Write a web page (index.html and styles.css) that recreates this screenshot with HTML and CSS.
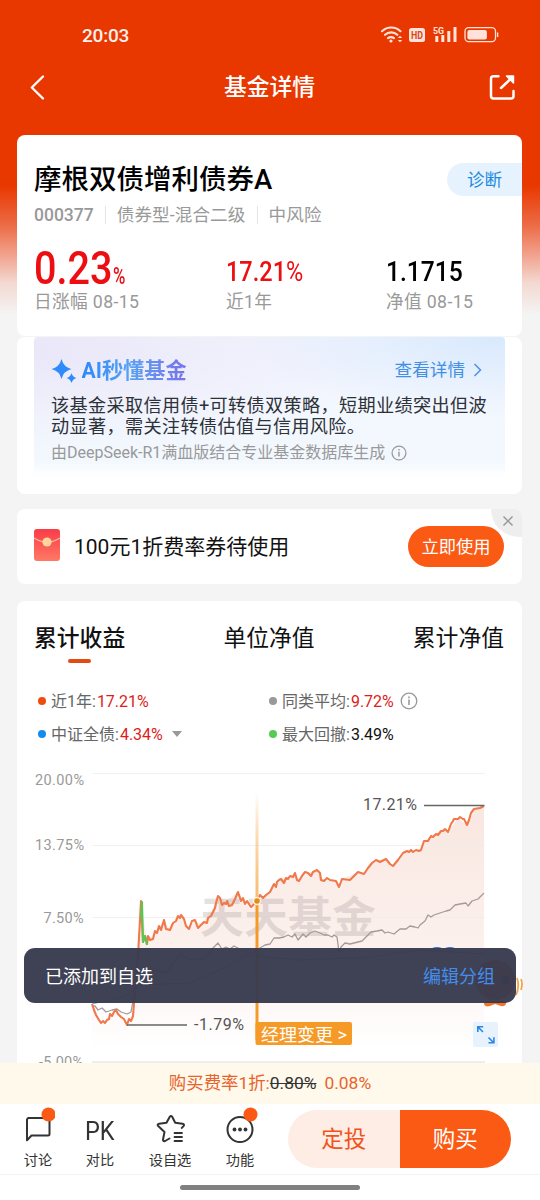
FILE: index.html
```html
<!DOCTYPE html>
<html lang="zh-CN">
<head>
<meta charset="utf-8">
<title>基金详情</title>
<link rel="stylesheet" href="styles.css">
</head>
<body>
<div class="phone">
  <div class="content">
    <header class="status">
      <span class="time">20:03</span>
      <svg class="status-icons" width="120" height="20" viewBox="380 25 120 20" fill="none" stroke="#ffe3da">
        <g stroke-width="2.1" stroke-linecap="round"><path d="M382 31.2a13.5 13.5 0 0 1 18.5 0M385 34.8a9 9 0 0 1 12.3 0M388 38.2a5 5 0 0 1 6 0"/></g>
        <circle cx="391" cy="41" r="1.6" fill="#ffe3da" stroke="none"/>
        <path d="M397.8 38l2.2-2.2 2.2 2.2zM397.8 40l2.2 2.2 2.2-2.2z" fill="#ffe3da" stroke="none"/>
        <rect x="409" y="28" width="16" height="14" rx="2.5" fill="#ffe3da" stroke="none"/>
        <text class="hd" x="411" y="39" textLength="12" lengthAdjust="spacingAndGlyphs">HD</text>
        <text class="fiveg" x="433" y="33.6" textLength="11" lengthAdjust="spacingAndGlyphs">5G</text>
        <path d="M436.8 36v6M442.8 35v7M448.8 31v11M455 27v15" stroke-width="3"/>
        <rect x="465" y="27.6" width="30.5" height="14" rx="3.5" stroke-width="1.3"/>
        <rect x="467.4" y="30" width="19.5" height="9.5" rx="2" fill="#ffe3da" stroke="none"/>
        <path d="M497.6 32.5v4.5" stroke-width="1.4"/>
      </svg>
    </header>
    <nav class="titlebar">
      <svg width="20" height="28" viewBox="27 73 20 28" fill="none" stroke="#fff" stroke-width="2.4" stroke-linecap="round" stroke-linejoin="round"><path d="M43 76.500L31.800 87.500L43 98.500"/></svg>
      <h1>基金详情</h1>
      <svg width="30" height="30" viewBox="487 72 30 30" fill="none" stroke="#fff" stroke-width="2.5" stroke-linecap="round"><path d="M498.500 76.200h-5a2.500 2.500 0 0 0-2.500 2.500v17.300a2.500 2.500 0 0 0 2.500 2.500h17.500a2.500 2.500 0 0 0 2.500-2.500v-5M501 88l11-10.500"/><path d="M506.500 76h7v7z" fill="#fff" stroke-width="1.500" stroke-linejoin="round"/></svg>
    </nav>

    <section class="card summary">
      <div class="name-row"><h2>摩根双债增利债券A</h2><a class="diagnose">诊断</a></div>
      <div class="meta"><span class="code">000377</span><span>债券型-混合二级</span><span>中风险</span></div>
      <div class="stats">
        <div><p class="num big"><b>0.23</b><i>%</i></p><p class="label">日涨幅 08-15</p></div>
        <div><p class="num year"><b>17.21<em>%</em></b></p><p class="label">近1年</p></div>
        <div><p class="num nav-value"><b>1.1715</b></p><p class="label">净值 08-15</p></div>
      </div>
    </section>
    <section class="card ai-card">
      <div class="ai">
        <div class="ai-head">
          <svg width="28" height="26" viewBox="51 358 28 26" fill="#2f8bfb"><path d="M61.500 360q2 8 10 10q-8 2-10 10q-2-8-10-10q8-2 10-10zM71.500 374q1.200 4.200 5 5q-3.800 1-5 5q-1.200-4-5-5q3.800-.8 5-5z"/></svg>
          <strong>AI秒懂基金</strong>
          <span class="more">查看详情</span>
          <svg width="10" height="16" viewBox="0 0 10 16" fill="none" stroke="#4c93e6" stroke-width="1.500"><path d="M1.500 2l6 6-6 6"/></svg>
        </div>
        <p class="ai-text">该基金采取信用债+可转债双策略，短期业绩突出但波<br>动显著，需关注转债估值与信用风险。</p>
        <p class="ai-source"><span>由DeepSeek-R1满血版结合专业基金数据库生成</span><svg width="16" height="16" viewBox="0 0 18 18" fill="none" stroke="#999" stroke-width="1.400"><circle cx="9" cy="9" r="7.800"/><path d="M9 7.500v5.500M9 4.500v1.700" stroke-width="1.600"/></svg></p>
      </div>
    </section>

    <section class="card promo">
      <svg class="envelope" width="26" height="32" viewBox="0 0 26 32"><defs><linearGradient id="env" x2="0" y2="1"><stop stop-color="#fa3c49"/><stop offset="1" stop-color="#ff7965"/></linearGradient></defs><rect width="26" height="32" rx="3" fill="url(#env)"/><path d="M0 9q13 8 26 0" fill="none" stroke="#ffb39c" stroke-width="1.200"/><circle cx="13" cy="13" r="4.600" fill="#ffd79a"/></svg>
      <p>100元1折费率券待使用</p>
      <button>立即使用</button>
      <span class="close"><svg width="12" height="12" viewBox="0 0 12 12" stroke="#999" stroke-width="1.500"><path d="M1.500 1.500l9 9M10.500 1.500l-9 9"/></svg></span>
    </section>

    <section class="card chart-card">
      <div class="tabs"><span class="active">累计收益</span><span>单位净值</span><span>累计净值</span></div>
      <div class="legend">
        <p><i class="dot orange"></i>近1年:<b>17.21%</b></p>
        <p><i class="dot gray"></i>同类平均:<b>9.72%</b><svg width="18" height="18" viewBox="0 0 18 18" fill="none" stroke="#999" stroke-width="1.300"><circle cx="9" cy="9" r="7.800"/><path d="M9 7.500v5.500M9 4.500v1.700" stroke-width="1.600"/></svg></p>
        <p><i class="dot blue"></i>中证全债:<b>4.34%</b><svg class="drop" width="10" height="6" viewBox="0 0 10 6" fill="#999"><path d="M0 0h10L5 6z"/></svg></p>
        <p><i class="dot green"></i>最大回撤:<b class="black">3.49%</b></p>
      </div>
      <svg class="chart" width="505" height="309" viewBox="17 754 505 309">
        <defs>
          <linearGradient id="area" x1="0" y1="806" x2="0" y2="1050" gradientUnits="userSpaceOnUse"><stop stop-color="#f9e7e0"/><stop offset=".6" stop-color="#fcf1ee"/><stop offset="1" stop-color="#fff"/></linearGradient>
          <linearGradient id="marker" x1="0" y1="792" x2="0" y2="900" gradientUnits="userSpaceOnUse"><stop stop-color="#f79b2b" stop-opacity="0"/><stop offset="1" stop-color="#f7bd74"/></linearGradient>
        </defs>
        <path d="M92 1062V1004L101 1023L110 1014L116 1010L127 1025L133 1016L138 955L141 901L147 940L156 931L164 920L170 930L180 915L189 929L195 920L201 924L213 908L218 896L226 901L238 892L251 907L257 901L270 892L282 879L295 873L299 881L308 873L318 870L323 881L336 881L339 887L342 879L358 872L364 874L376 860L386 859L393 866L407 851L420 851L424 841L444 829L448 832L458 818L467 825L476 808L484 806V1062z" fill="url(#area)"/>
        <path d="M92 773.500H485M92 845.500H485M92 917.500H485M92 989.500H485" stroke="#eee" stroke-opacity=".8"/>
        <path d="M92 1062H485" stroke="#ddd"/>
        <g class="axis"><text x="35" y="784.500" textLength="49">20.00%</text><text x="35" y="850" textLength="49">13.75%</text><text x="43.500" y="922.500" textLength="40">7.50%</text><text x="39" y="1067" textLength="44">-5.00%</text></g>
        <text class="watermark" x="200" y="933" textLength="176" lengthAdjust="spacingAndGlyphs">天天基金</text>
        <g fill="none" stroke-linejoin="round">
          <path d="M92 1004L105 1001L125 996L141 985L190 983L224 968L245 955L300 960L370 957L420 950L484 954" stroke="#70a8dd" stroke-width="1"/>
          <path d="M92 1006L95 1006L98 1010L102 1008L106 1012L112 1010L117 1009L121 1012L127 1014L131 1012L135 990L141 975L152 969L166 973L180 954L190 960L205 958L213 948L218 943L222 949L226 947L230 949L234 946L238 948L250 954L260 948L265 945L270 944L274 938L279 938L284 937L288 935L292 937L295 934L298 940L303 934L306 937L310 933L315 931L320 933L324 935L328 935L332 937L334 935L337 937L339 952L341 947L345 943L350 944L358 942L362 941L366 937L371 932L377 931L382 930L385 933L388 932L394 934L400 929L406 929L410 926L415 927L418 928L420 925L425 921L428 915L431 917L434 915L440 913L446 911L450 910L455 905L460 904L466 903L468 906L472 901L478 899L481 896L484 893" stroke="#a49a98" stroke-width="1.300"/>
          <path id="main" d="M92 1004L94 1010L96 1015L99 1020L101 1023L103 1021L105 1023L107 1020L109 1019L110 1014L112 1016L114 1012L116 1010L118 1014L121 1017L124 1019L127 1025L129 1019L131 1021L133 1016L135 990L138 955L140 920L141 901L143 942L145 936L147 944L148 936L150 940L153 939L155 931L157 933L159 926L161 930L164 920L166 929L170 930L173 923L176 921L178 916L180 918L181 915L184 919L186 926L189 929L192 921L195 920L198 928L201 925L204 922L207 923L208 918L211 916L213 912L215 908L216 903L218 896L220 898L222 905L224 903L226 904L227 901L229 906L232 905L235 899L238 892L241 901L243 898L245 904L247 901L251 907L254 904L257 901L260 895L263 898L266 895L270 892L272 888L274 884L276 887L277 882L279 880L281 879L284 883L286 878L288 879L290 876L293 877L295 873L297 880L299 881L302 876L305 872L308 873L311 876L313 872L317 870L320 873L321 880L324 881L327 878L330 880L336 881L339 887L342 879L350 880L354 876L358 872L361 873L364 874L368 868L372 863L376 860L380 862L386 859L390 864L393 866L398 860L403 853L407 851L409 852L411 850L413 852L416 850L419 851L421 850L424 841L428 841L431 836L433 837L436 834L438 835L441 831L443 831L445 829L448 832L451 824L453 821L454 819L458 819L460 817L463 819L464 819L467 825L469 820L471 813L474 809L480 808L484 806" stroke="#f0784a" stroke-width="2.100"/>
          <path d="M141 918L142 902L143 942L145 936L147 945" stroke="#5cc653" stroke-width="2.100"/>
          <path d="M424 805.500H484.500M127 1025H187" stroke="#666" stroke-width="1.300"/>
        </g>
        <g class="callout"><text x="363" y="810" textLength="54">17.21%</text><text x="194" y="1030" textLength="50">-1.79%</text></g>
        <rect x="255.500" y="792" width="3" height="110" fill="url(#marker)"/>
        <path d="M257 901V1040" stroke="#f59a27" stroke-width="3"/>
        <circle cx="257" cy="901" r="3.500" fill="#e28b18" stroke="#fff1d9" stroke-width="1.500"/>
        <rect x="255.500" y="1022" width="96.500" height="23" rx="2" fill="#f59a27"/>
        <text class="manager" x="261" y="1040.500" textLength="86" lengthAdjust="spacingAndGlyphs">经理变更 &gt;</text>
        <rect x="473" y="1022" width="25" height="25" rx="2" fill="#e7f2fd"/>
        <path d="M483 1032l-5-5M477.800 1032v-5.200h5.400M488.500 1037.500l5 5M488.500 1042.800h5.400v-5.500" fill="none" stroke="#2987e9" stroke-width="1.600"/>
      </svg>
    </section>
  </div>

  <div class="rate">购买费率1折:<s>0.80%</s><span>0.08%</span></div>
  <footer class="actions">
    <div class="action"><svg width="34" height="38" viewBox="21 1106 34 38" fill="none" stroke="#333" stroke-width="2" stroke-linejoin="round"><path d="M28 1118h20a1.500 1.500 0 0 1 1.500 1.500v14.500a1.500 1.500 0 0 1-1.500 1.500H31.500L27 1140.300v-20.800z"/><circle cx="48.500" cy="1114.500" r="7" fill="#fa5a14" stroke="none"/></svg><span>讨论</span></div>
    <div class="action"><div class="pk">PK</div><span>对比</span></div>
    <div class="action"><svg width="34" height="38" viewBox="153 1106 34 38" fill="none" stroke="#333" stroke-width="2" stroke-linejoin="round" stroke-linecap="round"><path d="M169.500 1138.500l-4.500 2.500q-2 .8-2-1.500l1.500-7.500-6.300-6q-1.500-1.800 1-2.200l7.300-1 3.300-6q1.200-1.800 2.400 0l3 6 7.300 1q2.400.5 1 2.300l-1.700 1.800"/><path d="M174.500 1133h7.500M174.500 1137h7.500M174.500 1141h7.500" stroke-width="1.800"/></svg><span>设自选</span></div>
    <div class="action"><svg width="38" height="38" viewBox="221 1106 38 38" fill="none" stroke="#333" stroke-width="2"><circle cx="240" cy="1129.500" r="12.500"/><g fill="#333" stroke="none"><circle cx="234.500" cy="1129.500" r="1.900"/><circle cx="240" cy="1129.500" r="1.900"/><circle cx="245.500" cy="1129.500" r="1.900"/></g><circle cx="250.500" cy="1114.500" r="7" fill="#fa5a14" stroke="none"/></svg><span>功能</span></div>
    <div class="buy"><span>定投</span><span>购买</span></div>
  </footer>
  <div class="home"><i></i></div>

  <svg class="mascot" width="100" height="70" viewBox="425 942 100 70">
    <path d="M433 948.500q4-1.500 8 0M446 948.500q4-1.500 8 0" fill="none" stroke="#2f70d8" stroke-width="1.500"/>
    <circle cx="495" cy="980" r="20" fill="#e86b28"/><circle cx="484" cy="980" r="4" fill="#222"/><circle cx="505" cy="980" r="4" fill="#222"/>
    <path d="M484 1001q-1 7 6 5l5-2 6 2q6 1 5-5z" fill="#f47424"/>
    <path d="M517 978q3 8-1 17M521 979q2 5 0 11" fill="none" stroke="#f5a24c" stroke-width="1.800"/>
  </svg>
  <div class="toast"><span>已添加到自选</span><a>编辑分组</a></div>
</div>
</body>
</html>
```

FILE: styles.css
```css
* { box-sizing: border-box; }
body, h1, h2, p { margin: 0; }
body { font-family: Roboto, "Noto Sans CJK SC", sans-serif; color: #111; }
svg { display: block; flex: none; }
i, em { font-style: normal; }

.phone {
  position: relative;
  display: flex;
  flex-direction: column;
  width: 540px;
  height: 1200px;
  overflow: hidden;
  background: #f4f4f4 linear-gradient(#e93700 0, #e93700 185px, #ec6b45 225px, #f1a28d 255px, #f3d9d1 283px, #f4f4f4 315px) no-repeat;
  white-space: nowrap;
}
.content { flex: 1; min-height: 0; overflow: hidden; }

.status { display: flex; justify-content: space-between; align-items: center; height: 70px; padding: 0 40px 0 82px; }
.time { color: #fff1eb; font-size: 19px; font-weight: 500; letter-spacing: -.2px; }
.hd { font: 700 10px Roboto; fill: #d8481c; stroke: none; }
.fiveg { font: 700 9px Roboto; fill: #ffe3da; stroke: none; }
.titlebar { display: flex; justify-content: space-between; align-items: center; height: 34px; padding: 0 23px 0 27px; color: #fff; }
.titlebar h1 { padding: 2px 0 0 5px; font-size: 22.8px; font-weight: 500; line-height: 32px; }

.card { width: 505px; margin: 0 auto 0 17px; background: #fff; border-radius: 8px; }
.summary { height: 201px; margin-top: 31px; padding: 26px 0 0 17px; }
.name-row { display: flex; justify-content: space-between; height: 38px; }
.name-row h2 { font-size: 27.500px; font-weight: 500; line-height: 38px; color: #000; }
.diagnose { width: 75px; height: 33px; margin-top: 2px; border-radius: 17px 0 0 17px; background: #e6f3fe; color: #1c8ae0; font-size: 17.500px; line-height: 34px; padding-left: 20px; }
.meta { display: flex; align-items: center; height: 32px; color: #999; font-size: 17.600px; }
.meta span + span { margin-left: 11px; padding-left: 12px; background: linear-gradient(#e5e5e5, #e5e5e5) 0 50% / 1px 18px no-repeat; line-height: 32px; letter-spacing: .1px; }
.meta .code { font-size: 17.500px; font-weight: 500; }
.stats { display: flex; padding-top: 13px; }
.stats > div { width: 192px; }
.stats > div:nth-child(2) { width: 160px; }
.stats > div:last-child { width: 110px; }
.num { display: flex; align-items: baseline; height: 47px; line-height: 48px; color: #ed0e12; }
.num b { font-weight: 500; transform-origin: 0 50%; }
.big b { width: 79px; font-size: 46px; transform: scaleX(.86); }
.big i { font-size: 24px; font-weight: 500; transform: scaleX(.7); transform-origin: 0 50%; }
.year b { font-size: 28px; transform: scaleX(.84); line-height: 56px; }
.year em { font-weight: 400; }
.nav-value b { font-size: 28px; transform: scaleX(.88); color: #000; line-height: 56px; }
.label { height: 22px; padding-top: 1px; font-size: 17.700px; line-height: 21px; color: #999; letter-spacing: .35px; }

.ai-card { height: 157px; margin-top: 1px; padding: 0 17px; }
.ai { height: 140px; padding: 19px 17px 0; border-radius: 4px; background: linear-gradient(transparent 88%, #fff), radial-gradient(ellipse at 100% 0, #d8e9fd, transparent 40%), radial-gradient(ellipse at 0 10%, #eae7f8, transparent 55%), linear-gradient(#f4f6fe, #f2f8fe); }
.ai-head { display: flex; align-items: center; height: 27px; padding-right: 5px; }
.ai-head strong { margin-left: 2.500px; padding-top: 2px; font-size: 21.200px; line-height: 27px; background: linear-gradient(90deg, #2c88f8, #58a2f2 45%, #7972ea); -webkit-background-clip: text; background-clip: text; color: transparent; }
.more { margin-left: auto; margin-right: 8px; color: #438fe5; font-size: 17.600px; position: relative; top: -1px; }
.ai-text { margin-top: 12px; font-size: 18.150px; line-height: 21.400px; letter-spacing: .35px; color: #2d3138; }
.ai-source { display: flex; align-items: center; gap: 6px; margin-top: 5px; height: 20px; font-size: 16px; line-height: 20px; color: #999; }

.promo { position: relative; display: flex; align-items: center; height: 75px; margin-top: 15px; padding: 0 18px 0 17px; }
.envelope { margin-bottom: 3px; }
.promo p { margin: 0 0 4px 14px; font-size: 21px; color: #111; }
.promo button { width: 96px; height: 41px; margin: 0 0 1px auto; padding: 0 0 2px; border: 0; border-radius: 21px; background: #fa5a14; color: #fff; font: 17.300px Roboto, "Noto Sans CJK SC", sans-serif; }
.close { position: absolute; top: 0; right: 0; width: 31px; height: 28px; padding: 6px 0 0 11px; border-radius: 0 8px 0 30px; background: #eee; }

.chart-card { height: 480px; margin-top: 17px; padding-top: 20px; }
.tabs { display: flex; justify-content: space-between; height: 43px; padding: 0 18px 0 17px; font-size: 22.800px; line-height: 36px; color: #111; }
.tabs .active { font-weight: 500; }
.tabs .active::after { content: ""; display: block; width: 23px; height: 4px; margin: 2px 0 0 34px; border-radius: 2px; background: #e24b13; }
.legend { display: grid; grid-template-columns: 231px 1fr; grid-auto-rows: 33px; padding: 20px 0 0 21px; font-size: 16px; color: #666; }
.legend p { display: flex; align-items: center; line-height: 33px; padding-top: 1px; }
.legend b { margin-left: 1px; color: #dc1d20; font-weight: 400; }
.legend .black { color: #111; }
.legend svg { margin-left: 6px; }
.legend .drop { margin-left: 9px; }
.dot { width: 8px; height: 8px; margin-right: 5px; border-radius: 50%; }
.orange { background: #ee4c0d; }
.gray { background: #999; }
.blue { background: #168bee; }
.green { background: #58ca56; }
.chart { margin-top: 4px; }
.axis { font-size: 14.500px; fill: #999; }
.callout { font-size: 16px; fill: #555; }
.watermark { font: 700 43px "Noto Sans CJK SC"; fill: #887a78; fill-opacity: .22; }
.manager { font-size: 17.500px; fill: #fff; }

.rate { flex: none; height: 41px; text-align: center; background: #fef9eb; color: #e8632c; font-size: 17.400px; line-height: 41px; }
.rate s { color: #333; }
.rate span { margin-left: 8px; }
.actions { flex: none; display: flex; height: 71px; background: #fff; border-bottom: 1px solid #f3f3f3; padding-left: 3px; }
.action { display: flex; flex-direction: column; align-items: center; width: 70px; padding-top: 2px; color: #333; font-size: 14.200px; line-height: 32px; }
.action:nth-child(2) { width: 54px; }
.action:nth-child(3) { width: 86px; }
.action:nth-child(4) { width: 54px; }
.action svg, .pk { height: 38px; }
.pk { font-size: 25px; line-height: 51px; transform: scaleX(.94); }
.buy { display: flex; width: 223px; height: 58px; margin: 6px 0 0 21px; border-radius: 29px; overflow: hidden; font-size: 22.500px; line-height: 58px; text-align: center; }
.buy span { flex: 1; background: #fdede5; color: #f0541b; }
.buy span + span { background: #fa5a14; color: #fff; }
.home { flex: none; height: 25px; background: #fff; padding: 10px 180px; }
.home i { display: block; height: 5px; border-radius: 3px; background: #808080; }

.mascot { position: absolute; left: 425px; top: 942px; }
.toast { position: absolute; left: 24px; top: 948px; display: flex; justify-content: space-between; align-items: center; width: 492px; height: 55px; padding: 0 21px 2px; border-radius: 11px; background: rgba(57, 59, 78, .97); color: #fff; font-size: 18px; }
.toast a { color: #438eed; }
```
